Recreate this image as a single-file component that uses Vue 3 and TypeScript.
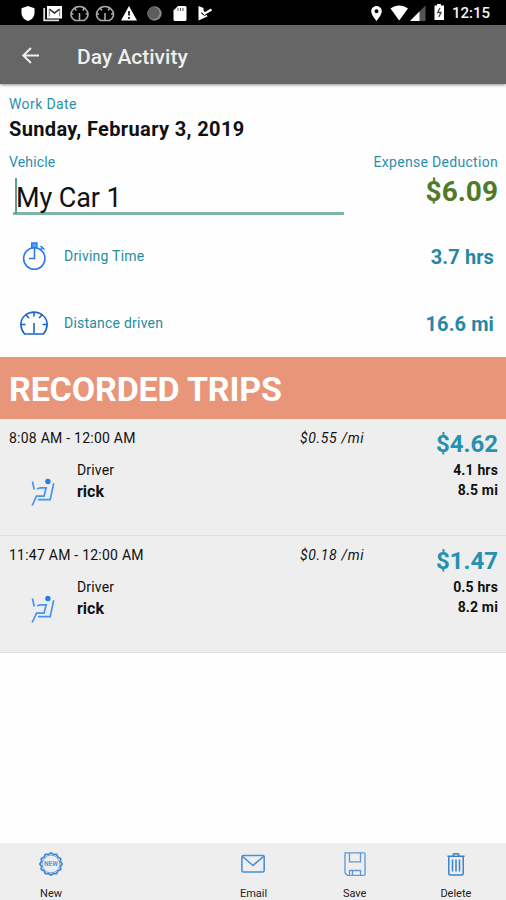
<script setup lang="ts">
interface Trip {
  period: string
  rate: string
  amount: string
  driver: string
  hours: string
  miles: string
}

const trips: Trip[] = [
  { period: '8:08 AM - 12:00 AM', rate: '$0.55 /mi', amount: '$4.62', driver: 'rick', hours: '4.1 hrs', miles: '8.5 mi' },
  { period: '11:47 AM - 12:00 AM', rate: '$0.18 /mi', amount: '$1.47', driver: 'rick', hours: '0.5 hrs', miles: '8.2 mi' },
]

// Scalloped outline of the "New" badge
const badge: string =
  Array.from({ length: 48 }, (_, i) => {
    const a = (i / 48) * Math.PI * 2
    const r = 10.4 + 0.75 * Math.cos(a * 12)
    return `${i ? 'L' : 'M'}${(12 + r * Math.sin(a)).toFixed(2)} ${(12 - r * Math.cos(a)).toFixed(2)}`
  }).join('') + 'Z'
</script>

<template>
  <div class="screen">
    <div class="status">
      <svg class="status-icons" width="220" height="25" viewBox="0 0 220 25" fill="#fff">
        <path d="M28 6l6.500 2.300v4.500c0 4-2.700 7-6.500 8.200-3.800-1.200-6.500-4.200-6.500-8.200V8.300z" />
        <path d="M44.200 8v12.300H59" fill="none" stroke="#ddd" stroke-width="1.800" />
        <path d="M47 6h15v12.500H47z" />
        <path d="M49.300 9l5.200 4 5.200-4" fill="none" stroke="#222" stroke-width="1.500" />
        <path d="M49.300 16.500V9M59.700 16.500V9" stroke="#777" stroke-width="1" />
        <g fill="none" stroke="#aaa" stroke-width="1.600">
          <path d="M75 20.500c-5-3-5-8-2-11 3.500-4 9.500-4 13 0 3 3 3 8-2 11zM79.500 20v-7M71 14h2.500M85.500 14h2.500M75 8.500l1.300 2M84 8.500l-1.300 2" />
          <path d="M100.500 20.500c-5-3-5-8-2-11 3.500-4 9.500-4 13 0 3 3 3 8-2 11zM105 20v-7M96.500 14h2.500M111 14h2.500M100.500 8.500l1.300 2M109.500 8.500l-1.300 2" />
        </g>
        <path d="M129 6l8 14.500h-16z" />
        <path d="M129 11v4.500M129 17v2" stroke="#111" stroke-width="1.700" />
        <circle cx="154.500" cy="13.500" r="7.200" fill="#888" />
        <circle cx="153.500" cy="13" r="6" fill="#5d5d5d" />
        <path d="M178 6h7q1.500 0 1.500 1.500v12q0 1.500-1.500 1.500h-10q-1.500 0-1.500-1.500V10.500z" />
        <path d="M178 8v3M180.500 8v3M183 8v3" stroke="#555" stroke-width="1" />
        <path d="M198.500 6l5 2v4l-2 1.500 2 1.500 3-.5 1 2-9 4z" />
        <path d="M200.500 8.500l4 5.200 7-4.200" fill="none" stroke="#fff" stroke-width="2.500" />
        <path d="M201 12.500l3.500 3 6-3" fill="none" stroke="#000" stroke-width=".9" />
      </svg>
      <div class="status-right">
        <svg width="80" height="25" viewBox="370 0 80 25" fill="#fff">
          <path fill-rule="evenodd" d="M376.500 6c3 0 5.300 2.300 5.300 5.300 0 3.700-5.300 9.700-5.300 9.700s-5.300-6-5.300-9.700c0-3 2.300-5.300 5.300-5.300zm0 3.300a2 2 0 100 4 2 2 0 000-4z" />
          <path d="M390.500 8.500c5.500-4 12-4 17.500 0L399.200 20.500z" />
          <path d="M425.500 5.500V21H410z" fill="#555" />
          <path d="M419.500 11.500V21H410z" />
          <path d="M437 4h4v1.500h3V20h-9.500V5.500h2.500z" />
          <path d="M440 8l-2.300 4.500h3.300l-2.200 4.500" fill="none" stroke="#444" stroke-width="1.300" />
        </svg>
        <span class="clock">12:15</span>
      </div>
    </div>

    <header class="appbar">
      <svg class="back" width="20" height="18" viewBox="0 0 20 18" fill="none" stroke="#eee" stroke-width="2">
        <path d="M18 8.500H2.500M10 1L2.300 8.500l7.700 7.500" />
      </svg>
      <h1>Day Activity</h1>
    </header>

    <section class="summary">
      <div class="label work">Work Date</div>
      <div class="date">Sunday, February 3, 2019</div>
      <div class="columns">
        <div class="vehicle">
          <div class="label vehicle-label">Vehicle</div>
          <div class="field"><span>My Car 1</span></div>
        </div>
        <div class="expense">
          <div class="label expense-label">Expense Deduction</div>
          <div class="deduction">$6.09</div>
        </div>
      </div>
    </section>

    <section class="metrics">
      <div class="metric">
        <svg width="28" height="32" viewBox="0 0 28 32" fill="none" stroke="#2c7be8" stroke-width="1.600">
          <circle cx="14.300" cy="18.500" r="10.700" />
          <path d="M14.500 8v10.500H9M20.500 9.500l2-2M20.500 6l4 3.500" />
          <path d="M11.800 3h5v4.500h-5z" fill="#6aa6f4" />
        </svg>
        <span class="metric-name driving">Driving Time</span>
        <span class="metric-value hours">3.7 hrs</span>
      </div>
      <div class="metric">
        <svg width="28" height="32" viewBox="0 0 28 32" fill="none" stroke="#1b63c8" stroke-width="1.600">
          <path d="M4.500 27C-1 20 .3 12.500 5 8.500c5-4.500 13-4.500 18 0 4.700 4 6 11.500.5 18.500z" />
          <path d="M14 26V16M14 5v4.500M6 8l3 3M22 8l-3 3M1 17.500h4.500M22.500 17.500H27" />
        </svg>
        <span class="metric-name distance">Distance driven</span>
        <span class="metric-value miles">16.6 mi</span>
      </div>
    </section>

    <h2 class="banner">RECORDED TRIPS</h2>

    <article v-for="trip in trips" :key="trip.period" class="trip">
      <div class="trip-main">
        <div class="period">{{ trip.period }}</div>
        <div class="person">
          <svg width="26" height="29" viewBox="0 0 26 29" fill="none" stroke="#4692f5" stroke-width="1.700">
            <circle cx="16.900" cy="3.500" r="2.700" fill="#237fe8" stroke="none" />
            <path d="M1.500 3.500L3.200 11.500M6 11l3-1.200h6.200l-2.200 8.400H5.500L1.200 27.500M22.700 5.200l-3.500 16.500H7" />
          </svg>
          <div>
            <div class="role">Driver</div>
            <div class="name">{{ trip.driver }}</div>
          </div>
        </div>
      </div>
      <div class="rate">{{ trip.rate }}</div>
      <div class="totals">
        <div class="amount">{{ trip.amount }}</div>
        <div class="detail">{{ trip.hours }}</div>
        <div class="detail">{{ trip.miles }}</div>
      </div>
    </article>

    <nav class="toolbar">
      <button class="tool">
        <svg width="24" height="24" viewBox="0 0 24 24" fill="none" stroke="#3b87d9" stroke-width="1.700">
          <path :d="badge" />
          <circle cx="12" cy="12" r="8.800" stroke-width=".6" />
          <text x="12" y="14" class="badge-text">NEW</text>
        </svg>
        <span>New</span>
      </button>
      <span class="tool" aria-hidden="true"></span>
      <button class="tool">
        <svg width="24" height="24" viewBox="0 0 24 24" fill="none" stroke="#4a90d9" stroke-width="1.600">
          <rect x=".9" y="3.500" width="22.300" height="16.500" rx="1.500" />
          <path d="M1.500 4.500L12 13.500l10.500-9" />
        </svg>
        <span>Email</span>
      </button>
      <button class="tool">
        <svg width="24" height="24" viewBox="0 0 24 24" fill="none" stroke="#6099d6" stroke-width="1.300">
          <path d="M2 .8h19q1 0 1 1v20.500q0 1-1 1H4.500L2 21zM6.500 .8v9h11V.8M6.500 23v-4.500h11V23M9.500 19v4" />
        </svg>
        <span>Save</span>
      </button>
      <button class="tool">
        <svg width="24" height="24" viewBox="0 0 24 24" fill="none" stroke="#3982cf" stroke-width="1.500">
          <path d="M3.500 4.300h17M9 3.800q0-2 1.500-2h3q1.500 0 1.500 2M4.800 4.500v17q0 1.500 1.500 1.500h11.400q1.500 0 1.500-1.500v-17M8.500 7.500v12M12 7.500v12M15.500 7.500v12" />
        </svg>
        <span>Delete</span>
      </button>
    </nav>
  </div>
</template>

<style>
body {
  margin: 0;
}
</style>

<style scoped>
.screen {
  width: 506px;
  height: 900px;
  display: flex;
  flex-direction: column;
  overflow: hidden;
  background: #fefefe;
  color: #111;
  font-family: Roboto, "Liberation Sans", sans-serif;
  white-space: nowrap;
}

.status {
  height: 25px;
  display: flex;
  justify-content: space-between;
  background: #000;
}

.status-right {
  display: flex;
  width: 136px;
}

.clock {
  margin-left: 2px;
  color: #f4f4f4;
  font-size: 15px;
  font-weight: 500;
  line-height: 27px;
}

.appbar {
  height: 59px;
  display: flex;
  align-items: center;
  padding: 2px 0 0 21px;
  box-sizing: border-box;
  background: #666;
  box-shadow: 0 1px 3px rgba(0, 0, 0, 0.45);
  color: #eee;
}

h1 {
  margin: 3px 0 0 36px;
  font-size: 21px;
  font-weight: 500;
  line-height: 26px;
}

.summary {
  height: 139px;
  padding: 11px 8px 0 9px;
  box-sizing: border-box;
}

.label {
  color: #2c8eae;
  font-size: 14px;
  line-height: 18px;
}

.work {
  letter-spacing: 0.4px;
}

.vehicle-label {
  letter-spacing: 0.15px;
}

.date {
  margin-top: 4px;
  font-size: 20px;
  font-weight: 700;
  line-height: 24px;
  letter-spacing: 0.36px;
}

.columns {
  display: flex;
  justify-content: space-between;
  margin-top: 12px;
}

.field {
  width: 331px;
  height: 37px;
  margin: 7px 0 0 4px;
  padding-left: 2px;
  box-sizing: border-box;
  border-bottom: 3px solid #7fb5a5;
}

.field span {
  display: block;
  height: 36px;
  border-left: 2px solid #5f9f8d;
  font-size: 27px;
  line-height: 40px;
  letter-spacing: -0.1px;
  text-indent: -1px;
}

.expense {
  text-align: right;
}

.expense-label {
  letter-spacing: 0.3px;
}

.deduction {
  margin-top: 4px;
  color: #4f7a29;
  font-size: 28px;
  font-weight: 700;
  line-height: 34px;
}

.metric {
  height: 67px;
  display: flex;
  align-items: center;
  padding: 0 12px 0 20px;
}

.metric svg {
  margin-bottom: 2px;
}

.metric-name {
  flex: 1;
  margin: 0 0 2px 16px;
  color: #268c9c;
  font-size: 14px;
  letter-spacing: 0.22px;
}

.metric-value {
  color: #2687a5;
  font-size: 20px;
  font-weight: 700;
  letter-spacing: 0.1px;
}

.banner {
  height: 62px;
  margin: 0;
  padding: 0 9px;
  box-sizing: border-box;
  background: #e8957a;
  color: #fff;
  font-size: 34px;
  font-weight: 700;
  line-height: 64px;
  letter-spacing: -0.15px;
}

.trip {
  height: 117px;
  display: flex;
  padding: 10px 8px 0 9px;
  box-sizing: border-box;
  border-bottom: 1px solid #dfdfdf;
  background: #eee;
}

.trip-main {
  width: 291px;
}

.period,
.rate,
.role {
  font-size: 14px;
  line-height: 18px;
}

.period {
  letter-spacing: 0.24px;
}

.person {
  display: flex;
  gap: 20px;
  margin: 14px 0 0 22px;
}

.person svg {
  margin-top: 17px;
}

.role {
  letter-spacing: 0.15px;
}

.name {
  font-size: 16px;
  font-weight: 700;
  line-height: 25px;
}

.rate {
  font-style: italic;
  letter-spacing: 0.65px;
}

.totals {
  flex: 1;
  text-align: right;
}

.amount {
  margin-bottom: 1px;
  color: #2592af;
  font-size: 24px;
  font-weight: 700;
  line-height: 31px;
}

.detail {
  font-size: 14px;
  font-weight: 700;
  line-height: 20px;
  letter-spacing: 0.15px;
}

.detail:nth-child(2) {
  line-height: 19px;
}

.toolbar {
  height: 57px;
  display: grid;
  grid-template-columns: repeat(5, 1fr);
  margin-top: auto;
  background: #eee;
}

.tool {
  display: flex;
  flex-direction: column;
  align-items: center;
  padding: 9px 0 0 1px;
  border: 0;
  background: none;
  color: #222;
  font: 11px/14px Roboto, "Liberation Sans", sans-serif;
}

.tool span {
  margin-top: 11px;
}

.badge-text {
  fill: #5b9be0;
  stroke: none;
  font-size: 6.500px;
  font-weight: 700;
  text-anchor: middle;
}
</style>
